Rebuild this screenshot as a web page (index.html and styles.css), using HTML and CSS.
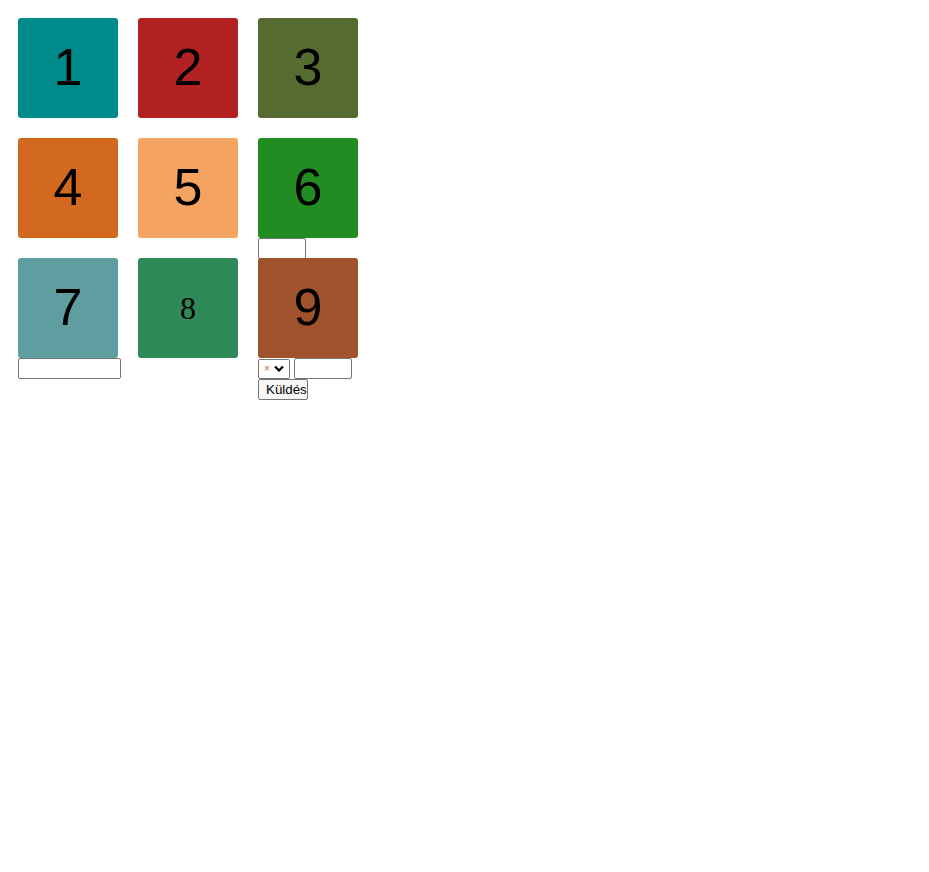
FILE: index.html
```html
<!DOCTYPE html>
<html>
<head>
<meta charset="utf-8">
<link rel="stylesheet" href="styles.css">
</head>
<body>
<div class="grid">
  <div class="cell"><div class="box c1">1</div></div>
  <div class="cell"><div class="box c2">2</div></div>
  <div class="cell"><div class="box c3">3</div></div>
  <div class="cell"><div class="box c4">4</div></div>
  <div class="cell"><div class="box c5">5</div></div>
  <div class="cell"><div class="box c6">6</div><input class="in6" type="text"></div>
  <div class="cell"><div class="box c7">7</div><input class="in7" type="text"></div>
  <div class="cell"><div class="box c8 serif">8</div></div>
  <div class="cell top"><div class="box c9">9</div>
    <div class="row"><select class="sel"><option>×</option></select><input class="in9" type="text"></div>
    <button class="btn">Küldés</button>
  </div>
</div>
</body>
</html>
```
FILE: styles.css
```css
html { height: 100%; }
body { margin: 8px; min-height: calc(100% - 16px); font-family: "Liberation Sans", Arial, sans-serif; }
.grid { display: grid; grid-template-columns: repeat(3, 100px); grid-auto-rows: 100px; gap: 20px; padding: 10px; }
.cell { display: flex; flex-direction: column; align-items: flex-start; height: 100px; }
.cell > * { flex: none; }
.top { position: relative; z-index: 1; }
.box { width: 100px; height: 100px; box-sizing: border-box; padding-bottom: 2px; border-radius: 3px; display: flex; align-items: center; justify-content: center; font-size: 52px; color: #000; }
.serif { font-family: "Liberation Serif", "Times New Roman", serif; font-size: 32px; padding-bottom: 0; }
.c1 { background: #008b8b; }
.c2 { background: #b22222; }
.c3 { background: #556b2f; }
.c4 { background: #d2691e; }
.c5 { background: #f4a460; }
.c6 { background: #228b22; }
.c7 { background: #5f9ea0; }
.c8 { background: #2e8b57; }
.c9 { background: #a0522d; }
input, select, button { font-family: "Liberation Sans", Arial, sans-serif; font-size: 13.33px; margin: 0; box-sizing: border-box; }
input { border: 1px solid #767676; border-radius: 2px; padding: 1px 2px; background: #fff; }
.in6 { width: 48px; height: 21px; }
.in7 { width: 103px; height: 21px; }
.row { display: flex; align-items: center; gap: 4px; flex: none; }
.row > * { flex: none; }
.sel { -webkit-appearance: none; appearance: none; width: 32px; height: 20px; font-size: 10px; color: #d2691e; border: 1px solid #767676; border-radius: 2px; padding: 0 0 0 5px; background: #fff url("data:image/svg+xml;utf8,<svg xmlns='http://www.w3.org/2000/svg' width='10' height='7' viewBox='0 0 10 7'><path d='M1 1.5 L5 5.5 L9 1.5' fill='none' stroke='black' stroke-width='2.2'/></svg>") no-repeat right 5px center; }
.in9 { width: 58px; height: 21px; }
.btn { width: 50px; height: 21px; padding: 1px 0 1px 7px; text-align: left; border: 1px solid #767676; border-radius: 2px; background: #f6f6f6; color: #000; }
```
